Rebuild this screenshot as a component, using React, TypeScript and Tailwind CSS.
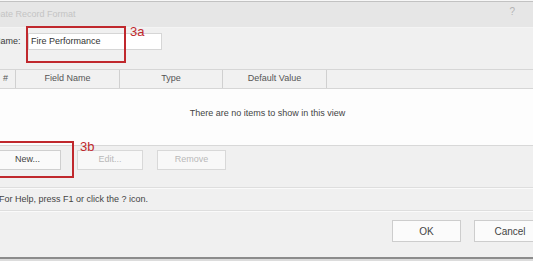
import React from "react";

export default function App() {
  return (
    <div className="relative w-[533px] h-[261px] overflow-hidden bg-[#f0f0f0] font-['Liberation_Sans',Arial,sans-serif] text-[9px] text-[#3a3a3a]">
      {/* top edge */}
      <div className="h-[1px] bg-[#f7f7f7]" />
      <div className="h-[1px] bg-[#c2c2c2]" />
      {/* title bar */}
      <div className="h-[25px] bg-[#e6e6e6] flex items-center justify-between">
        <span className="-ml-[14px] text-[#c4c4c4]">Create Record Format</span>
        <span className="mr-[18px] text-[10px] text-[#b4b4b4] -mt-[6px]">?</span>
      </div>
      <div className="h-[1px] bg-[#f4f4f4]" />

      {/* name row */}
      <div className="flex items-center pt-[5px] h-[22px]">
        <span className="-ml-[6px] w-[34px] shrink-0">Name:</span>
        <div className="w-[134px] h-[17px] bg-white border border-[#d6d6d6] flex items-center pl-[2px] text-[#333]">
          Fire Performance
        </div>
      </div>

      {/* listing */}
      <div className="mt-[19px]">
        <div className="h-[20px] flex border-y border-[#d6d6d6] bg-[#f1f1f1] text-[#555]">
          <div className="w-[16px] flex items-center pl-[3px] border-r border-[#d0d0d0]">#</div>
          <div className="w-[104px] flex items-center justify-center border-r border-[#d0d0d0]">Field Name</div>
          <div className="w-[103px] flex items-center justify-center border-r border-[#d0d0d0]">Type</div>
          <div className="w-[104px] flex items-center justify-center border-r border-[#d0d0d0]">Default Value</div>
          <div className="flex-1" />
        </div>
        <div className="h-[57px] bg-[#fdfdfd] border-b border-[#d8d8d8] flex items-center justify-center pl-[2px] pb-[6px] text-[#444]">
          There are no items to show in this view
        </div>
      </div>

      {/* buttons row */}
      <div className="flex mt-[4px] h-[20px]">
        <div className="-ml-[6px] w-[67px] shrink-0 h-[20px] bg-[#fafafa] border border-[#cfcfcf] flex items-center justify-center text-[#444]">New...</div>
        <div className="ml-[16px] w-[66px] shrink-0 h-[20px] bg-[#f8f8f8] border border-[#d8d8d8] flex items-center justify-center text-[#b8b8b8]">Edit...</div>
        <div className="ml-[14px] w-[69px] shrink-0 h-[20px] bg-[#f8f8f8] border border-[#d8d8d8] flex items-center justify-center text-[#b8b8b8]">Remove</div>
      </div>

      {/* help */}
      <div className="mt-[17px] h-[1px] bg-[#dedede]" />
      <div className="h-[1px] bg-[#fafafa]" />
      <div className="h-[21px] flex items-center -ml-[1px] text-[#444]">For Help, press F1 or click the ? icon.</div>
      <div className="h-[1px] bg-[#dedede]" />
      <div className="h-[1px] bg-[#fafafa]" />

      {/* ok / cancel */}
      <div className="flex mt-[8px] h-[22px]">
        <div className="ml-[392px] w-[69px] shrink-0 h-[22px] bg-[#fbfbfb] border border-[#cdcdcd] flex items-center justify-center text-[10px] text-[#444]">OK</div>
        <div className="ml-[13px] w-[72px] h-[22px] shrink-0 bg-[#fbfbfb] border border-[#cdcdcd] flex items-center justify-center text-[10px] text-[#444]">Cancel</div>
      </div>

      <div className="mt-[15px] h-[2px] bg-[#8c8c8c]" />
      <div className="h-[10px] bg-[#dcdcdc]" />

      {/* annotations */}
      <div className="absolute left-[26px] top-[26px] w-[100px] h-[37px] border-2 border-[#c0282d]" />
      <div className="absolute left-[130px] top-[25px] text-[13px] leading-none text-[#c0282d]">3a</div>
      <div className="absolute -left-[8px] top-[141px] w-[82px] h-[37px] border-2 border-[#c0282d]" />
      <div className="absolute left-[80px] top-[140px] text-[13px] leading-none text-[#c0282d]">3b</div>
    </div>
  );
}
